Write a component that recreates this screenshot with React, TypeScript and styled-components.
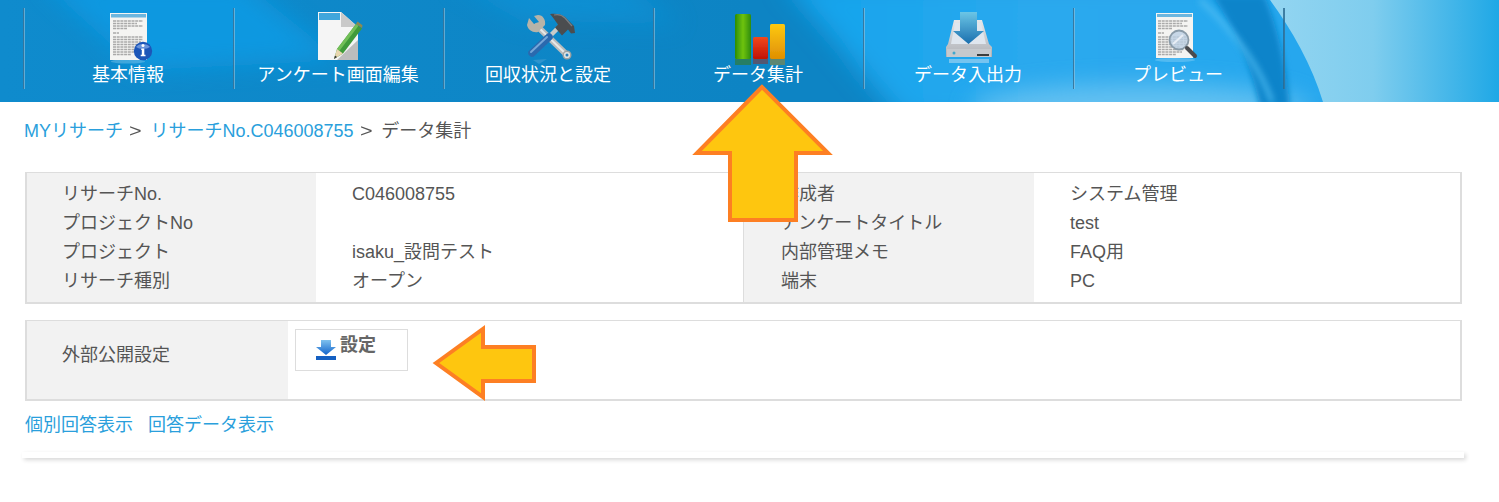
import React from "react";
import styled, { createGlobalStyle } from "styled-components";

const FONT = `"Liberation Sans", "Noto Sans CJK JP", sans-serif`;
const SEPARATOR = "rgba(40, 105, 145, 0.8)";
const SEPARATOR_LIGHT = "rgba(150, 195, 220, 0.6)";

const Global = createGlobalStyle`
  html, body { margin: 0; padding: 0; background: #fff; }
  body { font-family: ${FONT}; font-size: 18px; color: #555; overflow: hidden; }
`;

const Page = styled.div`
  position: relative;
  width: 1499px;
  height: 502px;
  overflow: hidden;
`;

const Header = styled.header`
  position: relative;
  height: 102px;
  padding: 8px 0 0 23px;
  box-sizing: border-box;
  background: #0f8ccb;
`;

const HeaderArt = styled.svg`
  position: absolute;
  inset: 0;
  width: 100%;
  height: 100%;
`;

const Nav = styled.nav`
  position: relative;
  display: flex;
  height: 81px;
  padding-right: 2px;
  width: fit-content;
  box-shadow: inset -2px 0 0 ${SEPARATOR}, inset -1px 0 0 ${SEPARATOR_LIGHT};
`;

const NavItem = styled.a`
  display: flex;
  flex-direction: column;
  align-items: center;
  width: 210px;
  box-sizing: border-box;
  color: #fff;
  font-size: 18px;
  line-height: 20px;
  box-shadow: inset 1px 0 0 ${SEPARATOR}, inset 2px 0 0 ${SEPARATOR_LIGHT};
`;

const IconBox = styled.svg`
  width: 64px;
  height: 57px;
  flex: none;
  margin-left: 2px;
  overflow: visible;
`;

const Main = styled.main`
  padding: 0 37px 0 25px;
`;

const Breadcrumb = styled.div`
  height: 70px;
  margin-left: -1px;
  padding-top: 18px;
  box-sizing: border-box;
  line-height: 22px;
  color: #555;
`;

const Crumb = styled.a`
  color: #2a9fdc;
`;

const CrumbSep = styled.span`
  display: inline-block;
  margin: 0 10px 0 7px;
  transform: scaleX(1.2);
`;

const InfoTable = styled.div`
  display: flex;
  height: 132px;
  box-sizing: border-box;
  border: 1px solid #ddd;
  border-left-width: 2px;
  border-right-width: 2px;
  border-bottom-width: 2px;
`;

const Column = styled.div<{ $label?: boolean; $width: number; $divider?: boolean; $inset: number }>`
  width: ${(p) => p.$width}px;
  flex: none;
  box-sizing: border-box;
  padding: 7px 0 0 ${(p) => p.$inset}px;
  background: ${(p) => (p.$label ? "#f2f2f2" : "#fff")};
  ${(p) => (p.$divider ? "border-right: 1px solid #ddd;" : "")}
`;

const Line = styled.div`
  height: 29px;
  line-height: 29px;
  white-space: nowrap;
`;

const PublicRow = styled.div`
  display: flex;
  height: 81px;
  margin-top: 16px;
  box-sizing: border-box;
  border: 2px solid #ddd;
  border-top-width: 1px;
`;

const PublicLabel = styled.div`
  width: 261px;
  box-sizing: border-box;
  padding: 21px 0 0 35px;
  line-height: 26px;
  background: #f2f2f2;
`;

const PublicValue = styled.div`
  flex: 1;
  padding: 8px 0 0 7px;
`;

const SettingButton = styled.button`
  display: flex;
  align-items: flex-start;
  width: 113px;
  height: 42px;
  padding: 2px 0 0 20px;
  box-sizing: border-box;
  border: 1px solid #ddd;
  background: #fff;
  color: #666;
  font: bold 18px/26px ${FONT};
  gap: 4px;
`;

const ButtonGlyph = styled.svg`
  flex: none;
  margin-top: 7px;
`;

const LinkRow = styled.div`
  display: flex;
  gap: 15px;
  margin-top: 12px;
  line-height: 24px;
`;

const PlainLink = styled.a`
  color: #2a9fdc;
`;

const CardFoot = styled.div`
  height: 6px;
  margin: 15px -2px 0 -3px;
  background: #fff;
  box-shadow: 2px 2px 4px rgba(0, 0, 0, 0.16);
`;

const Callout = styled.svg`
  position: absolute;
  left: 0;
  top: 0;
  width: 1499px;
  height: 502px;
  pointer-events: none;
`;

const Soft = "url(#iconSoft)";

const DocLines = () => (
  <g stroke="#8d8d8d" strokeWidth="1.3" strokeDasharray="3 .7" opacity=".72">
    <path d="M16 13H46M16 15.500H40M16 18H46M16 20.500H30" />
    <path d="M16 25H22" />
    <path d="M16 29H46M16 31.500H46M16 34H44M16 36.500H46M16 39H38M16 41.500H42M16 44H40M16 46.500H34" />
  </g>
);

const InfoIcon = () => (
  <IconBox viewBox="0 0 64 57">
    <g filter={Soft}>
      <rect x="13" y="5" width="37" height="47" fill="#f4f4f2" />
      <rect x="14" y="6" width="35" height="3.500" fill="#6cb6de" />
      <DocLines />
      <ellipse cx="31" cy="53.500" rx="17" ry="2" fill="#fff" opacity=".22" />
      <circle cx="46" cy="43" r="9.200" fill="#1d56b8" />
      <path d="M39 39a8 6 0 0 1 14 0a9 5 0 0 1-14 0z" fill="#7fa5e4" opacity=".8" />
      <circle cx="46" cy="37.500" r="1.500" fill="#fff" />
      <path d="M44.300 40.500h3v6.300h1.200v1.400h-4.800v-1.400h1.100v-4.900h-.6z" fill="#fff" />
    </g>
  </IconBox>
);

const EditIcon = () => (
  <IconBox viewBox="0 0 64 57">
    <g filter={Soft}>
      <path d="M11 4h23l17 15v33H11z" fill="#f5f5f5" />
      <path d="M12 5h21v7H12z" fill="#3fa6dc" />
      <path d="M34 4l17 15h-17z" fill="#c9c9c9" />
      <path d="M30 52l21-20v20z" fill="#bdbdbd" />
      <path d="M27 51l3-10 19-25 6 4.500-19 25z" fill="#3f9b3b" />
      <path d="M30 41l19-25 2.500 1.800-19 25z" fill="#72bf58" />
      <path d="M27 51l3-10 6 4.500z" fill="#e9d6ae" />
      <path d="M27 51l1-3.600 2 1.600z" fill="#333" />
      <path d="M49 16l1.500-2.500 5 3.700-.5 2.800z" fill="#8c8a52" />
    </g>
  </IconBox>
);

const ToolsIcon = () => (
  <IconBox viewBox="0 0 64 57">
    <g filter={Soft}>
      <path d="M20 18L49 46" stroke="#b9bcbc" strokeWidth="6" strokeLinecap="round" />
      <path d="M20 18L49 46" stroke="#e6e8e8" strokeWidth="2" />
      <path d="M12 10l5 6 5-2-5-6 4-1c5 0 8 5 7 10l-7 7c-5 1-10-2-11-7z" fill="#b6b3a8" />
      <circle cx="50" cy="47" r="3.800" fill="#dfe3e3" stroke="#9ea2a2" strokeWidth="1.400" />
      <circle cx="50" cy="47" r="1.500" fill="#2b7fbc" />
      <path d="M31 30L46 15" stroke="#c9cbc9" strokeWidth="4.500" />
      <path d="M15 45L32 29" stroke="#2c69ae" strokeWidth="7.500" strokeLinecap="round" />
      <path d="M14 44L30 29" stroke="#74a7d8" strokeWidth="2" strokeLinecap="round" />
      <path d="M33 6c6-1 11 0 15 3l9 9 1 7-4 .5-3-4-6 6-7-8 3-3c-3-4-5-7-8-10.500z" fill="#4b4d50" />
      <path d="M37 7c4-1 8 0 11 3l7 8" stroke="#7a7d80" strokeWidth="1.200" fill="none" />
      <path d="M16 52l14-1 -8 5z" fill="#4ea2d4" opacity=".5" />
    </g>
  </IconBox>
);

const ChartIcon = () => (
  <IconBox viewBox="0 0 64 57">
    <defs>
      <linearGradient id="barGreen" x1="0" x2="1" y1="0" y2="0">
        <stop offset="0" stopColor="#2d8d05" />
        <stop offset=".5" stopColor="#6ec30c" />
        <stop offset="1" stopColor="#2f8c08" />
      </linearGradient>
      <linearGradient id="barRed" x1="0" x2="0" y1="0" y2="1">
        <stop offset="0" stopColor="#f0481c" />
        <stop offset="1" stopColor="#c01204" />
      </linearGradient>
      <linearGradient id="barGold" x1="0" x2="0" y1="0" y2="1">
        <stop offset="0" stopColor="#fdc910" />
        <stop offset="1" stopColor="#e08f04" />
      </linearGradient>
    </defs>
    <g filter={Soft}>
      <rect x="8" y="6" width="16" height="45" rx="1.500" fill="url(#barGreen)" />
      <rect x="26" y="29" width="15" height="22" rx="1.500" fill="url(#barRed)" />
      <rect x="43" y="16" width="15" height="35" rx="1.500" fill="url(#barGold)" />
      <rect x="8" y="51" width="16" height="6" fill="#3a7a16" opacity=".55" />
      <rect x="26" y="51" width="15" height="5" fill="#9a2a22" opacity=".5" />
      <rect x="43" y="51" width="15" height="6" fill="#a88a20" opacity=".5" />
    </g>
  </IconBox>
);

const DriveIcon = () => (
  <IconBox viewBox="0 0 64 57">
    <defs>
      <linearGradient id="driveBody" x1="0" x2="0" y1="0" y2="1">
        <stop offset="0" stopColor="#e6e7ea" />
        <stop offset="1" stopColor="#aeb1b6" />
      </linearGradient>
      <linearGradient id="driveArrow" x1="0" x2="0" y1="0" y2="1">
        <stop offset="0" stopColor="#6cc6e6" />
        <stop offset="1" stopColor="#1a6fae" />
      </linearGradient>
    </defs>
    <g filter={Soft}>
      <path d="M17 12h28l7 24 3 3v10H9V39l2-3z" fill="url(#driveBody)" />
      <path d="M18 15h26l5 21H14z" fill="#dfe6ee" />
      <path d="M10 41h44v8H10z" fill="#c6c9cd" />
      <circle cx="17" cy="45" r="1.500" fill="#43a7cd" />
      <path d="M40 46h12v2H40z" fill="#3b3c3e" />
      <path d="M23 4h17v19h7L31.500 36 16 23h7z" fill="url(#driveArrow)" />
      <path d="M12 51h40v4H12z" fill="#d7e6f2" opacity=".45" />
    </g>
  </IconBox>
);

const PreviewIcon = () => (
  <IconBox viewBox="0 0 64 57">
    <g filter={Soft}>
      <rect x="9" y="5" width="37" height="45" fill="#f4f4f2" />
      <rect x="10" y="6" width="35" height="3" fill="#6cb6de" />
      <g transform="translate(-5 0)">
        <DocLines />
      </g>
      <circle cx="32" cy="32" r="9.500" fill="#bcd0e4" fillOpacity=".8" stroke="#8a9ba8" strokeWidth="1.800" />
      <path d="M26 36l10-9" stroke="#e8eef5" strokeWidth="2" />
      <path d="M40 40l8 8" stroke="#4a4c50" strokeWidth="4" strokeLinecap="round" />
      <ellipse cx="28" cy="52" rx="20" ry="2" fill="#fff" opacity=".2" />
    </g>
  </IconBox>
);

const DownloadIcon = () => (
  <ButtonGlyph width="20" height="22" viewBox="0 0 20 22">
    <defs>
      <linearGradient id="dlBlue" x1="0" x2="0" y1="0" y2="1">
        <stop offset="0" stopColor="#7fc1ee" />
        <stop offset="1" stopColor="#1264cc" />
      </linearGradient>
    </defs>
    <path d="M5 1h10v7h5l-10 8L0 8h5z" fill="url(#dlBlue)" />
    <path d="M0 17h20v4H0z" fill="#1560c2" />
  </ButtonGlyph>
);

const navItems = [
  { label: "基本情報", icon: <InfoIcon /> },
  { label: "アンケート画面編集", icon: <EditIcon /> },
  { label: "回収状況と設定", icon: <ToolsIcon /> },
  { label: "データ集計", icon: <ChartIcon /> },
  { label: "データ入出力", icon: <DriveIcon /> },
  { label: "プレビュー", icon: <PreviewIcon /> },
];

const leftLabels = ["リサーチNo.", "プロジェクトNo", "プロジェクト", "リサーチ種別"];
const leftValues = ["C046008755", "\u00a0", "isaku_設問テスト", "オープン"];
const rightLabels = ["作成者", "アンケートタイトル", "内部管理メモ", "端末"];
const rightValues = ["システム管理", "test", "FAQ用", "PC"];

const Lines = ({ items }: { items: string[] }) => (
  <>
    {items.map((t, i) => (
      <Line key={i}>{t}</Line>
    ))}
  </>
);

export default function App() {
  return (
    <Page>
      <Global />
      <svg width="0" height="0" style={{ position: "absolute" }}>
        <defs>
          <filter id="iconSoft" x="-10%" y="-10%" width="120%" height="120%">
            <feGaussianBlur stdDeviation="0.55" />
          </filter>
        </defs>
      </svg>
      <Header>
        <HeaderArt viewBox="0 0 1499 102" preserveAspectRatio="none">
          <defs>
            <linearGradient id="hdBase" x1="0" x2="1" y1="0" y2="0">
              <stop offset="0" stopColor="#0f8bcd" />
              <stop offset=".5" stopColor="#0d84c4" />
              <stop offset="1" stopColor="#0d84c4" />
            </linearGradient>
            <linearGradient id="hdBright" x1="0" x2="1" y1="0" y2="0">
              <stop offset="0" stopColor="#12a3ec" />
              <stop offset=".35" stopColor="#2aa9ee" />
              <stop offset="1" stopColor="#24a6ee" />
            </linearGradient>
            <linearGradient id="hdLight" x1="0" x2="1" y1="0" y2="0">
              <stop offset="0" stopColor="#93d5f1" />
              <stop offset=".45" stopColor="#7fcdee" />
              <stop offset="1" stopColor="#1fa8e6" />
            </linearGradient>
            <filter id="hdBlur" x="-30%" y="-60%" width="160%" height="220%">
              <feGaussianBlur stdDeviation="3" />
            </filter>
            <filter id="hdBlurWide" x="-30%" y="-60%" width="160%" height="220%">
              <feGaussianBlur stdDeviation="12" />
            </filter>
          </defs>
          <rect width="1499" height="102" fill="url(#hdBase)" />
          <path d="M40 -20L240 -20 340 60 140 70z" fill="#0f9ce6" opacity=".8" filter="url(#hdBlurWide)" />
          <path d="M450 -20L620 -20 680 24 520 20z" fill="#0e96dc" opacity=".6" filter="url(#hdBlurWide)" />
          <path d="M782 -20H1500V122H905z" fill="url(#hdBright)" filter="url(#hdBlurWide)" />
          <ellipse cx="1140" cy="108" rx="170" ry="24" fill="#8ad2f4" opacity=".6" filter="url(#hdBlurWide)" />
          <path d="M1212 -5h52c14 32 22 70 26 112h-30c-8-40-26-80-48-112z" fill="#0c84ca" filter="url(#hdBlur)" />
          <path d="M1200 0c30 28 58 62 72 102" stroke="#4dbcf2" strokeWidth="4" fill="none" filter="url(#hdBlur)" />
          <path d="M1270 0h229v102H1323c-11-37-31-72-53-102z" fill="url(#hdLight)" />
        </HeaderArt>
        <Nav>
          {navItems.map((item) => (
            <NavItem key={item.label}>
              {item.icon}
              {item.label}
            </NavItem>
          ))}
        </Nav>
      </Header>
      <Main>
        <Breadcrumb>
          <Crumb>MYリサーチ</Crumb>
          <CrumbSep>&gt;</CrumbSep>
          <Crumb>リサーチNo.C046008755</Crumb>
          <CrumbSep>&gt;</CrumbSep>
          データ集計
        </Breadcrumb>
        <InfoTable>
          <Column $label $width={289} $inset={35}>
            <Lines items={leftLabels} />
          </Column>
          <Column $width={428} $divider $inset={36}>
            <Lines items={leftValues} />
          </Column>
          <Column $label $width={290} $inset={37}>
            <Lines items={rightLabels} />
          </Column>
          <Column $width={426} $inset={36}>
            <Lines items={rightValues} />
          </Column>
        </InfoTable>
        <PublicRow>
          <PublicLabel>外部公開設定</PublicLabel>
          <PublicValue>
            <SettingButton>
              <DownloadIcon />
              設定
            </SettingButton>
          </PublicValue>
        </PublicRow>
        <LinkRow>
          <PlainLink>個別回答表示</PlainLink>
          <PlainLink>回答データ表示</PlainLink>
        </LinkRow>
        <CardFoot />
      </Main>
      <Callout viewBox="0 0 1499 502">
        <g fill="#fec60f" stroke="#fd7f23" strokeWidth="4" strokeLinejoin="miter">
          <path d="M762 87L697 153H730V220H796V153H828z" />
          <path d="M436 363L483 329V347H534V381H483V397z" />
        </g>
      </Callout>
    </Page>
  );
}
